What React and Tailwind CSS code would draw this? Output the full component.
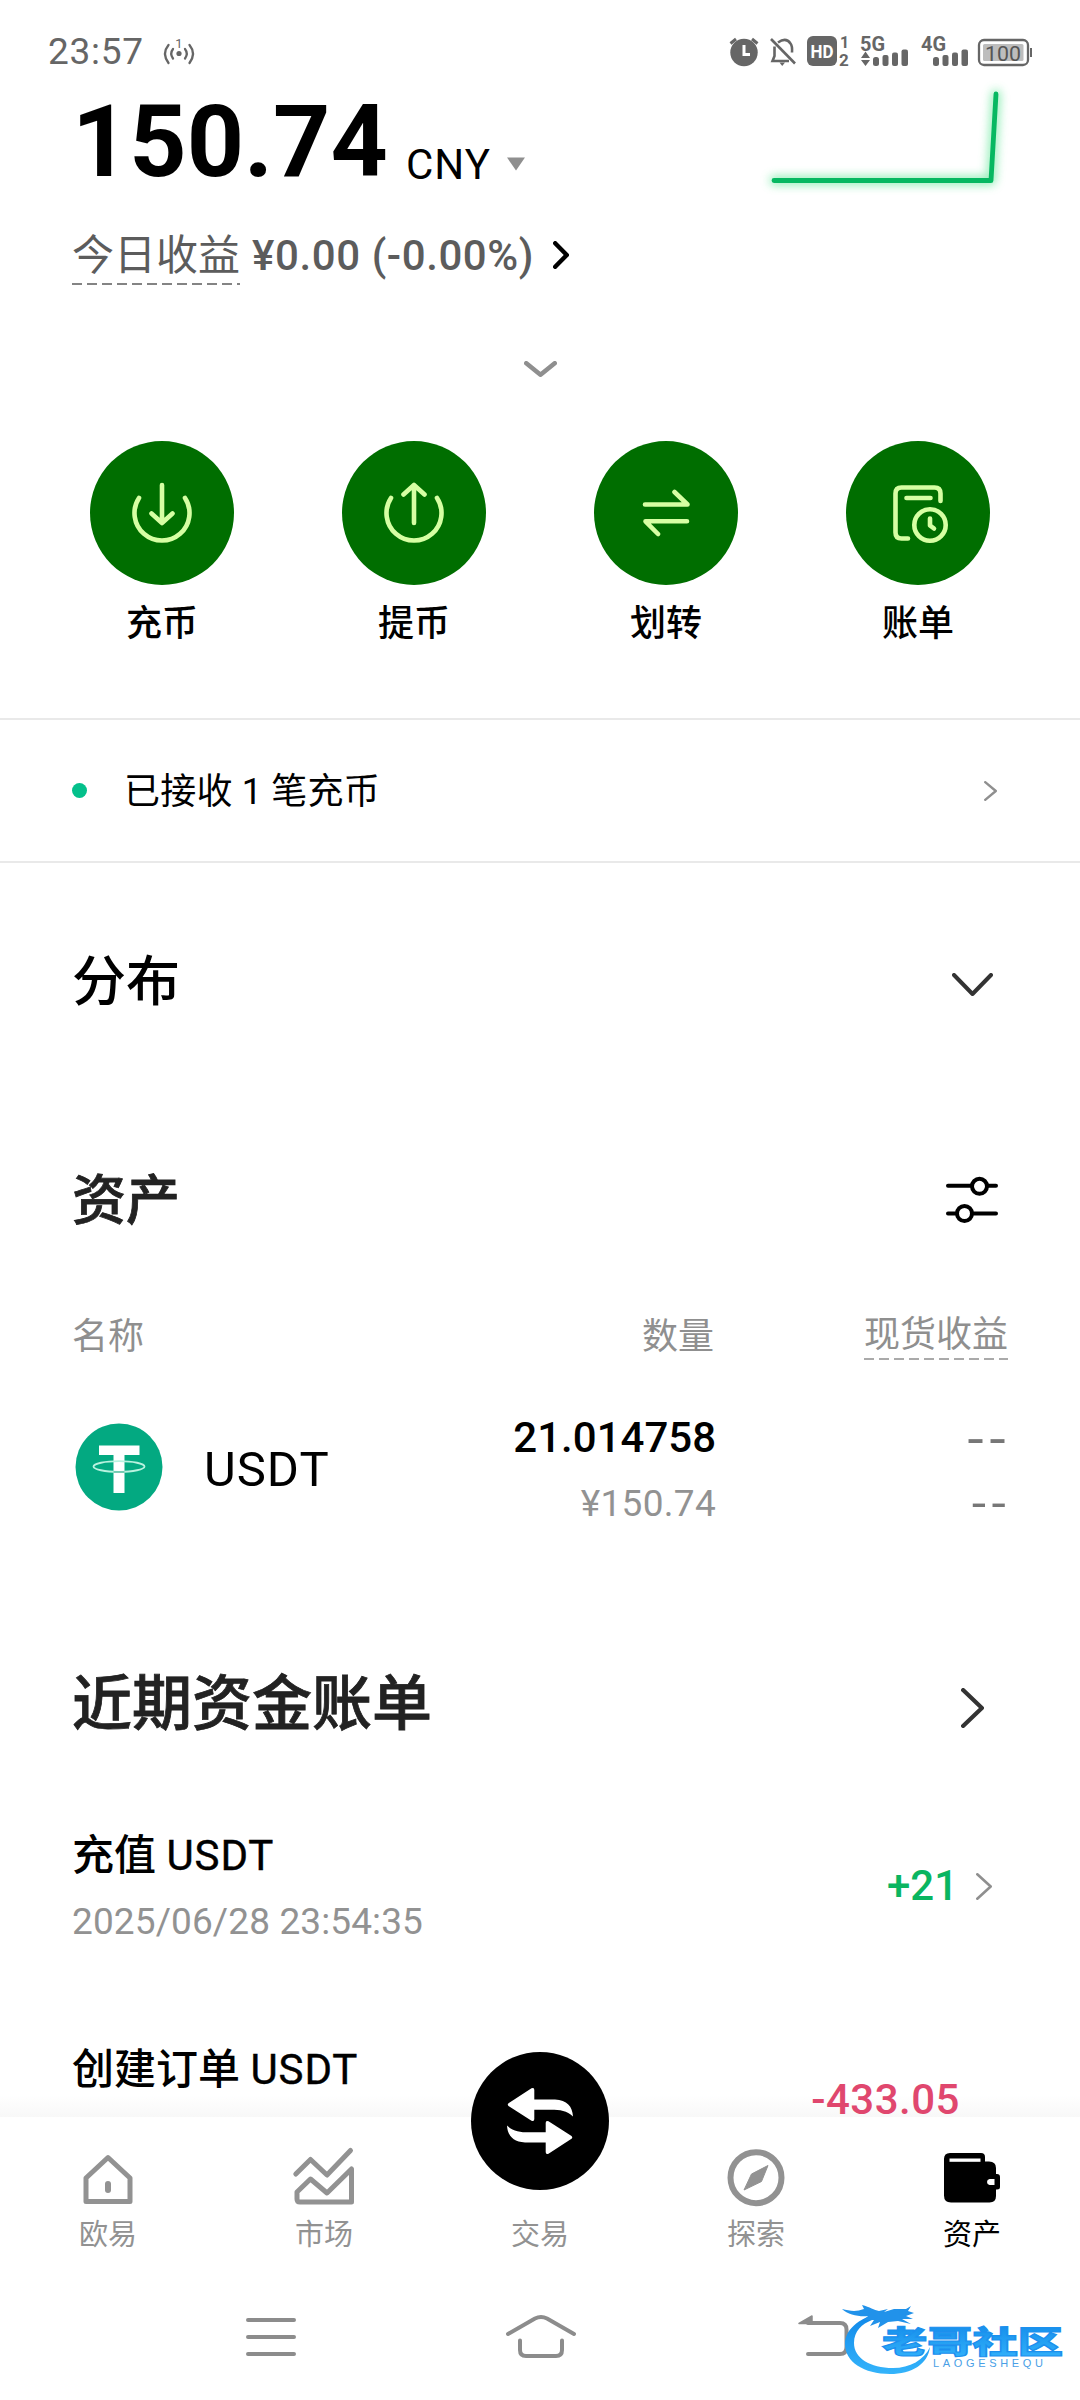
import React from "react";

const round = { strokeLinecap: "round", strokeLinejoin: "round", fill: "none" };

function ChevronRight({ w, h, sw, color, className = "" }) {
  return (
    <svg width={w} height={h} viewBox={`0 0 ${w} ${h}`} className={className}>
      <path
        d={`M${sw / 2} ${sw / 2} L${w - sw / 2} ${h / 2} L${sw / 2} ${h - sw / 2}`}
        stroke={color}
        strokeWidth={sw}
        {...round}
      />
    </svg>
  );
}

function ChevronDown({ w, h, sw, color, className = "" }) {
  return (
    <svg width={w} height={h} viewBox={`0 0 ${w} ${h}`} className={className}>
      <path
        d={`M${sw / 2} ${sw / 2} L${w / 2} ${h - sw / 2} L${w - sw / 2} ${sw / 2}`}
        stroke={color}
        strokeWidth={sw}
        {...round}
      />
    </svg>
  );
}

function DashedLine({ width, color, className = "" }) {
  return (
    <svg width={width} height="2" className={className}>
      <path d={`M0 1H${width}`} stroke={color} strokeWidth="1.4" strokeDasharray="10 5" />
    </svg>
  );
}

function StatusBar() {
  return (
    <header className="flex h-[92px] shrink-0 items-center pt-[10px] pl-[48px] text-[#666666]">
      <span className="w-[96px] text-[37px] leading-none tracking-[0.7px]">23:57</span>
      <svg width="32" height="30" viewBox="163 36 32 30" className="ml-[19px] overflow-visible">
        <circle cx="179" cy="53.5" r="2.6" fill="#666" />
        <g stroke="#666" strokeWidth="2.3" {...round}>
          <path d="M173 49Q169.500 53.500 173 58.500M168.500 45Q161.500 53.500 168.500 63M185 49Q188.500 53.500 185 58.500M189.500 45Q196.500 53.500 189.500 63" />
        </g>
        <text x="179" y="48" fontSize="13" textAnchor="middle" fill="#666">1</text>
      </svg>
      <svg width="306" height="32" viewBox="728 35 306 32" className="ml-[533px] overflow-visible" fill="#666" fontFamily="Roboto, sans-serif">
        <circle cx="744" cy="52.500" r="13.700" />
        <path d="M730.500 43.500L736 39M757.500 43.500L752 39" stroke="#666" strokeWidth="3" />
        <path d="M744 45V54.500H750" stroke="#fff" strokeWidth="3" fill="none" />
        <g stroke="#666" strokeWidth="2.600" fill="none">
          <path d="M771 39L795 63.500" />
          <path d="M774.500 46.500V56L772.500 61H789M778 42.500Q786 37 790.500 43.500Q792.500 46 792 52.500" />
        </g>
        <path d="M779.500 62.500H785L782.200 66Z" />
        <rect x="807" y="36" width="30" height="30" rx="6" />
        <text x="822" y="58" fontSize="18" fontWeight="700" fill="#fff" textAnchor="middle" textLength="23" lengthAdjust="spacingAndGlyphs">HD</text>
        <text x="844.500" y="48" fontSize="16" fontWeight="700" textAnchor="middle">1</text>
        <text x="844" y="66" fontSize="17" fontWeight="700" textAnchor="middle">2</text>
        <text x="860" y="51" fontSize="20" fontWeight="700" textLength="25" lengthAdjust="spacingAndGlyphs">5G</text>
        <path d="M861 58L865.500 51.500L870 58ZM861 60L865.500 66L870 60Z" />
        <rect x="873" y="57" width="6" height="9" rx="2.500" />
        <rect x="882.500" y="55" width="6" height="11" rx="2" />
        <rect x="892" y="52.500" width="6" height="13.500" rx="2" />
        <rect x="901.500" y="49.500" width="6.500" height="16.500" rx="2" />
        <text x="921" y="51" fontSize="20" fontWeight="700" textLength="25" lengthAdjust="spacingAndGlyphs">4G</text>
        <rect x="933" y="57" width="6" height="9" rx="2.500" />
        <rect x="942.500" y="55" width="6" height="11" rx="2" />
        <rect x="952" y="52.500" width="6" height="13.500" rx="2" />
        <rect x="961.500" y="49.500" width="6.500" height="16.500" rx="2" />
        <rect x="979" y="40" width="49" height="25" rx="5" fill="none" stroke="#666" strokeWidth="2.300" />
        <rect x="983" y="44" width="40.500" height="17" rx="1.500" fill="#bdbdbd" />
        <rect x="1030" y="48" width="2" height="9" />
        <text x="1003" y="60.500" fontSize="21" textAnchor="middle" textLength="36" lengthAdjust="spacingAndGlyphs" fill="#555">100</text>
      </svg>
    </header>
  );
}

function Balance() {
  return (
    <section className="shrink-0">
      <div className="flex h-[96px] items-center pl-[72px]">
        <span className="mt-[3px] w-[334px] text-[100px] leading-none font-bold text-black">150.74</span>
        <span className="mt-[49px] w-[86px] text-[42px] leading-none tracking-[1px] text-black">CNY</span>
        <svg width="20" height="14" viewBox="0 0 20 14" className="mt-[48px] ml-[14px]">
          <path d="M1 0.500H19L10 13.500Z" fill="#8f8f8f" />
        </svg>
        <svg width="240" height="106" viewBox="765 87 240 106" className="ml-[239px] overflow-visible">
          <defs>
            <filter id="glow" x="-20%" y="-60%" width="140%" height="220%">
              <feGaussianBlur stdDeviation="5" />
            </filter>
          </defs>
          <path d="M774 180.500H991L996 94" stroke="#5ee695" strokeWidth="9" opacity="0.7" filter="url(#glow)" {...round} />
          <path d="M774 180.500H991L996 94" stroke="#06b861" strokeWidth="4.800" {...round} />
        </svg>
      </div>
      <div className="flex h-[134px] items-center pl-[72px] text-[42px] leading-[50px] text-[#5c5c5c]">
        <div className="relative mt-[2px]">
          今日收益
          <DashedLine width={168} color="#5c5c5c" className="absolute top-[52px] left-0" />
        </div>
        <span className="mt-[2px] ml-[12px] w-[288px] font-medium tracking-[0.6px] whitespace-nowrap">¥0.00 (-0.00%)</span>
        <ChevronRight w={16} h={28} sw={4.4} color="#000" className="ml-[13px]" />
      </div>
      <div className="flex h-[94px] items-center justify-center">
        <ChevronDown w={33} h={16} sw={4.6} color="#8f8f8f" />
      </div>
    </section>
  );
}

const actions = [
  {
    label: "充币",
    icon: (
      <>
        <path d="M139 498A27.500 27.500 0 1 0 185 498" />
        <path d="M162 485V523M151.500 513.500L162 523L172.500 513.500" />
      </>
    ),
  },
  {
    label: "提币",
    icon: (
      <>
        <path d="M139 498A27.500 27.500 0 1 0 185 498" />
        <path d="M162 523V485M151.500 494.500L162 485L172.500 494.500" />
      </>
    ),
  },
  {
    label: "划转",
    icon: <path d="M141 504.500H183.500L170.500 492M183 521.300H141.500L154 534" />,
  },
  {
    label: "账单",
    icon: (
      <>
        <path d="M184.500 501V493.500Q184.500 487.500 178.500 487.500H145.500Q139.500 487.500 139.500 493.500V532.500Q139.500 538.500 145.500 538.500H152" />
        <path d="M150.500 498H174.500" />
        <circle cx="174" cy="525" r="15.700" />
        <path d="M174 518.500V525.500L178 528.500" />
      </>
    ),
  },
];

function Actions() {
  return (
    <section className="grid h-[302px] shrink-0 grid-cols-4 px-[36px] pt-[25px]">
      {actions.map((a) => (
        <div key={a.label} className="flex flex-col items-center">
          <div className="size-[144px] rounded-full bg-[#006e00]">
            <svg width="144" height="144" viewBox="90 441 144 144" stroke="#d6ffa3" strokeWidth="4.600" {...round}>
              {a.icon}
            </svg>
          </div>
          <span className="mt-[21px] text-[36px] leading-[36px] font-medium text-black">{a.label}</span>
        </div>
      ))}
    </section>
  );
}

function UsdtLogo() {
  return (
    <svg width="88" height="88" viewBox="75.500 1422.500 88 88">
      <circle cx="119.500" cy="1466.500" r="43.500" fill="#03a981" />
      <path d="M99.500 1445H140V1454.500H125V1492.500H114V1454.500H99.500Z" fill="#fff" />
      <ellipse cx="119.500" cy="1466" rx="25.500" ry="5.300" fill="none" stroke="#b9f2df" strokeWidth="1.800" />
      <path d="M114 1471.500H125" stroke="#2aa584" strokeWidth="1" />
    </svg>
  );
}

function Assets() {
  return (
    <section className="shrink-0">
      <div className="flex h-[236px] items-center justify-between pr-[87px] pl-[72px]">
        <h2 className="mt-[4px] text-[54px] leading-none font-medium text-black">分布</h2>
        <ChevronDown w={41} h={23} sw={4} color="#333" className="mt-[7px]" />
      </div>
      <div className="flex h-[202px] items-center justify-between pr-[81px] pl-[72px]">
        <h2 className="mt-[4px] text-[54px] leading-none font-medium text-[#222] [-webkit-text-stroke:0.8px_#222]">资产</h2>
        <svg width="54" height="50" viewBox="945 1175 54 50" stroke="#000" strokeWidth="4" {...round}>
          <path d="M948 1185.700H971M988 1185.700H996M948 1213.500H956M973 1213.500H996" />
          <circle cx="979.500" cy="1186.300" r="7.500" />
          <circle cx="964.500" cy="1213.500" r="7.500" />
        </svg>
      </div>
      <div className="flex h-[68px] items-center px-[72px] pt-[3px] text-[36px] leading-[40px] text-[#8f8f8f]">
        <span className="flex-1">名称</span>
        <span className="w-[200px] text-right">数量</span>
        <div className="relative -mt-[3px] ml-[150px] w-[144px]">
          现货收益
          <DashedLine width={144} color="#8f8f8f" className="absolute top-[43px] left-0" />
        </div>
      </div>
      <div className="flex h-[196px] items-center pr-[72px] pl-[75px]">
        <UsdtLogo />
        <span className="mt-[5px] ml-[41px] flex-1 text-[49px] leading-none tracking-[1px] text-black">USDT</span>
        <div className="mt-[7px] flex w-[240px] flex-col text-right leading-[66px]">
          <span className="text-[42px] font-medium text-black">21.014758</span>
          <span className="text-[37px] tracking-[0.3px] text-[#929292]">¥150.74</span>
        </div>
        <div className="flex w-[292px] origin-right scale-x-115 flex-col pt-[1px] text-right font-['Noto_Sans'] leading-[65px] text-[#777]">
          <span className="-mr-[2px] text-[50px] tracking-[3px]">--</span>
          <span className="-mr-[2px] text-[44px] tracking-[3px]">--</span>
        </div>
      </div>
    </section>
  );
}

function Bills() {
  return (
    <section className="shrink-0 pt-[30px]">
      <div className="flex h-[216px] items-center justify-between pr-[96px] pl-[72px]">
        <h2 className="mt-[4px] text-[60px] leading-none font-medium text-[#222] [-webkit-text-stroke:0.8px_#222]">近期资金账单</h2>
        <ChevronRight w={23} h={40} sw={4.2} color="#333" className="mt-[9px]" />
      </div>
      <div className="flex h-[214px] items-start pt-[12px] pr-[88px] pl-[72px] leading-[66px]">
        <div className="flex flex-1 flex-col">
          <span className="text-[42px] font-medium text-black">
            充值 <span className="font-normal tracking-[0.9px] [-webkit-text-stroke:0.4px_#000]">USDT</span>
          </span>
          <span className="text-[37px] tracking-[0.12px] text-[#929292]">2025/06/28 23:54:35</span>
        </div>
        <span className="mt-[30px] text-[42px] font-medium text-[#0ab560]">+21</span>
        <ChevronRight w={16} h={27} sw={2.6} color="#8f8f8f" className="mt-[50px] ml-[18px]" />
      </div>
      <div className="flex items-start justify-between pt-[12px] pr-[120px] pl-[72px] text-[42px] leading-[66px] font-medium">
        <span className="text-black">
          创建订单 <span className="font-normal tracking-[0.9px] [-webkit-text-stroke:0.4px_#000]">USDT</span>
        </span>
        <span className="mt-[30px] tracking-[0.5px] text-[#e0476e]">-433.05</span>
      </div>
    </section>
  );
}

const tabs = [
  {
    label: "欧易",
    icon: (
      <g stroke="#929292" strokeWidth="5" {...round}>
        <path d="M86 2201.500V2178L108 2157.500L130 2178V2201.500Z" />
        <path d="M108 2184V2190" strokeWidth="6" />
      </g>
    ),
  },
  {
    label: "市场",
    icon: (
      <g stroke="#929292" strokeWidth="5" {...round}>
        <path d="M79.800 2174L94.500 2159.500L111 2175L134.500 2150.500" />
        <path d="M81 2192L94.500 2179L111 2193L135.500 2169V2202H84Q81 2202 81 2199Z" />
      </g>
    ),
  },
  { label: "交易", icon: null },
  {
    label: "探索",
    icon: (
      <g>
        <circle cx="108" cy="2177.700" r="25.500" stroke="#929292" strokeWidth="6" fill="none" />
        <path d="M120 2165.500L113.500 2181.500L96 2190L103.500 2174Z" fill="#929292" stroke="#929292" strokeLinejoin="round" />
      </g>
    ),
  },
  {
    label: "资产",
    active: true,
    icon: (
      <g>
        <path d="M80 2159Q80 2153 86 2153H117Q121 2153 121 2157V2161.500H125Q132 2161.500 132 2168V2174H133Q136 2174 136 2177V2187Q136 2189.500 133 2189.500H132V2196Q132 2202.500 125.500 2202.500H87Q80 2202.500 80 2195.500Z" fill="#000" />
        <path d="M85.500 2158.500H116.500V2161.800H85.500Z" fill="#fff" />
        <path d="M130.500 2179H125.500Q123 2179.300 123 2182Q123 2184.700 125.500 2185H130.500Z" fill="#fff" />
      </g>
    ),
  },
];

function TabBar() {
  return (
    <nav className="relative grid h-[153px] grid-cols-5 bg-white">
      {tabs.map((t) => (
        <div key={t.label} className="flex flex-col items-center pt-[29px]">
          <svg width="64" height="64" viewBox="76 2146 64 64">{t.icon}</svg>
          <span className={t.active ? "mt-[10px] text-[29px] leading-[30px] text-black" : "mt-[10px] text-[29px] leading-[30px] text-[#929292]"}>
            {t.label}
          </span>
        </div>
      ))}
      <svg width="138" height="138" viewBox="471 2052 138 138" className="absolute -top-[65px] left-[471px]">
        <circle cx="540" cy="2121" r="69" fill="#000" />
        <g fill="#fff">
          <path d="M508.500 2103.200L531.500 2088.300Q534.300 2087 534.300 2090V2099.500H555C567 2100 572.500 2106.500 573 2116.500C567 2110.500 560 2109.700 551 2109.700H534.300V2119Q534.300 2122 531.500 2120.700L508.500 2106Q507 2104.600 508.500 2103.200Z" />
          <path transform="rotate(180 540 2121)" d="M508.500 2103.200L531.500 2088.300Q534.300 2087 534.300 2090V2099.500H555C567 2100 572.500 2106.500 573 2116.500C567 2110.500 560 2109.700 551 2109.700H534.300V2119Q534.300 2122 531.500 2120.700L508.500 2106Q507 2104.600 508.500 2103.200Z" />
        </g>
      </svg>
    </nav>
  );
}

function CommunityMark() {
  return (
    <svg width="226" height="80" viewBox="840 2300 226 80" className="absolute top-[30px] left-[840px] overflow-visible">
      <defs>
        <linearGradient id="blue" x1="0" y1="0" x2="0" y2="1">
          <stop offset="0" stopColor="#0f86e8" />
          <stop offset="1" stopColor="#34b4fb" />
        </linearGradient>
      </defs>
      <path
        d="M884 2312C862 2316 845 2328 845 2344C845 2362 864 2374 890 2374C912 2374 928 2364 930 2347C924 2360 910 2368 893 2368C870 2368 854 2358 854 2343C854 2331 862 2324 872 2320Z"
        fill="url(#blue)"
      />
      <path
        d="M842 2309C850 2311 856 2312 864 2309L862 2305C870 2307 874 2310 879 2311L888 2309L884 2312L894 2309L906 2309L911 2306L908 2311L914 2313L906 2316L913 2319L902 2319L911 2324L898 2321L888 2322L878 2328L880 2322L870 2326L874 2320L864 2320L868 2316C860 2317 848 2315 842 2309Z"
        fill="#2192ea"
      />
      <text x="882" y="2352.500" fontSize="31" fontWeight="900" fill="url(#blue)" stroke="#1c90ee" strokeWidth="1.200" textLength="181" lengthAdjust="spacingAndGlyphs" fontFamily="'Noto Sans CJK SC', sans-serif">
        老哥社区
      </text>
      <text x="933" y="2367" fontSize="11" fill="#4a9fe6" textLength="110" fontFamily="'Liberation Sans', sans-serif">
        LAOGESHEQU
      </text>
    </svg>
  );
}

function SystemNav() {
  return (
    <div className="relative flex h-[130px] items-start pt-[40px] pl-[244px]">
      <svg width="54" height="54" viewBox="244 2310 54 54" stroke="#8c8c8c" strokeWidth="4" {...round}>
        <path d="M248 2320H294M248 2337H294M248 2354H294" />
      </svg>
      <svg width="74" height="54" viewBox="504 2310 74 54" stroke="#8c8c8c" strokeWidth="4" className="ml-[206px]" {...round}>
        <path d="M508 2334L535 2318.500Q541 2315.500 547 2318.500L574 2334" />
        <path d="M520 2340.500V2350Q520 2356 526 2356H556Q562 2356 562 2350V2340.500" />
      </svg>
      <svg width="56" height="54" viewBox="796 2310 56 54" stroke="#8c8c8c" strokeWidth="4" className="ml-[218px]" {...round}>
        <path d="M808 2354H840Q846.500 2354 846.500 2347V2329.500Q846.500 2323 840 2323H808" />
        <path d="M799 2323.500L812 2316V2323.500Z" fill="#8c8c8c" strokeWidth="1.500" />
      </svg>
      <CommunityMark />
    </div>
  );
}

export default function App() {
  return (
    <div className="flex h-[2400px] w-[1080px] flex-col bg-white font-[Roboto,'Noto_Sans_CJK_SC',sans-serif]">
      <main className="flex h-[2117px] flex-col overflow-hidden bg-[linear-gradient(to_bottom,#fff_2095px,#f8f8f8_2117px)]">
        <StatusBar />
        <Balance />
        <Actions />
        <section className="flex h-[145px] shrink-0 items-center border-y-2 border-[#e9e9e9] pr-[83px] pl-[72px]">
          <span className="size-[15px] rounded-full bg-[#04c08b]" />
          <span className="mt-[3px] ml-[37px] flex-1 text-[36px] leading-none tracking-[0.2px] text-black">已接收 1 笔充币</span>
          <ChevronRight w={13} h={20} sw={2.4} color="#8f8f8f" />
        </section>
        <Assets />
        <Bills />
      </main>
      <footer className="h-[283px] bg-white">
        <TabBar />
        <SystemNav />
      </footer>
    </div>
  );
}
